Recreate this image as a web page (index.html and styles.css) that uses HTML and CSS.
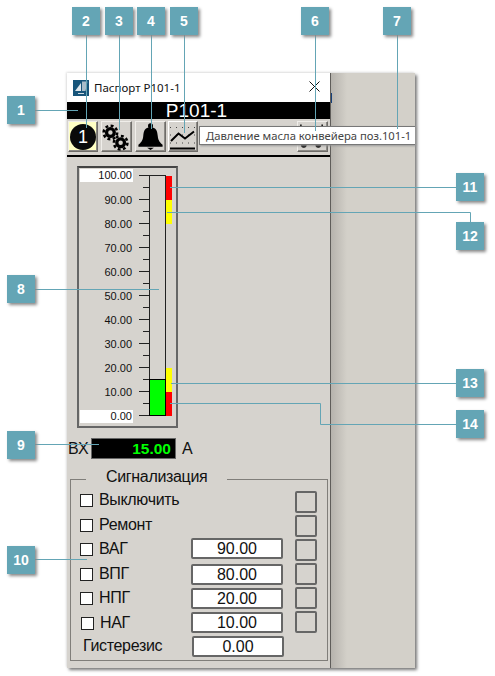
FILE: index.html
```html
<!DOCTYPE html>
<html lang="ru">
<head>
<meta charset="utf-8">
<title>Паспорт Р101-1</title>
<link rel="stylesheet" href="styles.css">
</head>
<body>
<main class="canvas">
  <section class="shot">
    <div class="window">
      <header class="titlebar">
        <svg class="logo" viewBox="0 0 16 16" width="16" height="16"><rect width="16" height="16" fill="#17557a"/><path d="M2 11 L8 3 L8 11Z" fill="#dfe7ec"/><path d="M9 11 L9 1.500 L14.500 1.500 L12.500 11Z" fill="#a9bdc9"/><rect x="5" y="13" width="6" height="1" fill="#cfdbe3"/></svg>
        <span class="title-text">Паспорт Р101-1</span>
        <svg class="close" viewBox="0 0 11 11" width="11" height="11"><path d="M0.5 0.5 L10.5 10.5 M10.5 0.5 L0.5 10.5" stroke="#111" stroke-width="1" fill="none"/></svg>
      </header>
      <div class="namebar">P101-1</div>
      <nav class="toolbar">
        <button class="tool tool-alert"><span class="num-circle">1</span></button>
        <button class="tool">
          <svg viewBox="0 0 30 30" width="30" height="30">
            <g fill="none" stroke="#000"><circle cx="8.700" cy="10.400" r="4" stroke-width="3.400"/><circle cx="8.700" cy="10.400" r="7" stroke-width="2.600" stroke-dasharray="3 2.500"/><circle cx="19.300" cy="21" r="4" stroke-width="3.400"/><circle cx="19.300" cy="21" r="7" stroke-width="2.600" stroke-dasharray="3 2.500"/></g>
          </svg>
        </button>
        <button class="tool">
          <svg viewBox="0 0 30 30" width="30" height="30"><circle cx="15" cy="3.500" r="2.600"/><path d="M15 5 C9 5 8 9 7.500 14 C7 19 5 21 2.500 23 L2.500 25 L27.500 25 L27.500 23 C25 21 23 19 22.500 14 C22 9 21 5 15 5Z"/><path d="M11.500 26 L18.500 26 L15 28.500Z"/></svg>
        </button>
        <button class="tool tool-pressed">
          <svg viewBox="0 0 28 28" width="28" height="28"><path d="M1 4.500 H26 M1 12 H26 M1 20 H26" stroke="#444" stroke-width="1" stroke-dasharray="1 5" fill="none"/><path d="M2 18 L9.500 10.500 L16 15.500 L25 8.500" stroke="#000" stroke-width="2" fill="none"/><rect x="1" y="24.500" width="25" height="2" fill="#000"/></svg>
        </button>
        <span class="tool-spacer"></span>
        <button class="tool">
          <svg viewBox="0 0 30 30" width="30" height="30"><path d="M3 2 V4 M25 2 V4" stroke="#000" stroke-width="1.500"/><circle cx="6" cy="23" r="3"/><circle cx="21" cy="23" r="3"/></svg>
        </button>
      </nav>
      <div class="toolbar-rule"></div>

      <div class="gauge">
        <div class="gauge-labels">
          <span class="gauge-label gauge-label-box">100.00</span>
          <span class="gauge-label">90.00</span>
          <span class="gauge-label">80.00</span>
          <span class="gauge-label">70.00</span>
          <span class="gauge-label">60.00</span>
          <span class="gauge-label">50.00</span>
          <span class="gauge-label">40.00</span>
          <span class="gauge-label">30.00</span>
          <span class="gauge-label">20.00</span>
          <span class="gauge-label">10.00</span>
          <span class="gauge-label gauge-label-box">0.00</span>
        </div>
        <svg class="gauge-scale" viewBox="0 0 36 246" width="36" height="246">
          <g stroke="#222" stroke-width="1" fill="none" shape-rendering="crispEdges">
            <path d="M0 3.500 H11 M0 27.500 H11 M0 51.500 H11 M0 75.500 H11 M0 99.500 H11 M0 123.500 H11 M0 147.500 H11 M0 171.500 H11 M0 195.500 H11 M0 219.500 H11 M0 243.500 H11"/>
            <path d="M4 15.500 H11 M4 39.500 H11 M4 63.500 H11 M4 87.500 H11 M4 111.500 H11 M4 135.500 H11 M4 159.500 H11 M4 183.500 H11 M4 207.500 H11 M4 231.500 H11"/>
            <path d="M10.500 3 V244 M26.500 3 V244 M11 3.500 H27"/>
          </g>
          <rect x="10.500" y="207.500" width="16" height="36" fill="#00ff00" stroke="#000" shape-rendering="crispEdges"/>
          <rect x="27" y="4" width="6" height="24" fill="#ff0000"/>
          <rect x="27" y="28" width="6" height="24" fill="#ffff00"/>
          <rect x="27" y="196" width="6" height="24" fill="#ffff00"/>
          <rect x="27" y="220" width="6" height="24" fill="#ff0000"/>
        </svg>
      </div>

      <div class="reading">
        <span class="reading-name">ВХ</span>
        <span class="reading-value">15.00</span>
        <span class="reading-unit">А</span>
      </div>

      <fieldset class="alarms">
        <legend class="alarms-title">Сигнализация</legend>
        <div class="alarm-row"><span class="lead lift-2"><span class="check"></span><span class="alarm-name">Выключить</span></span><span class="lamp"></span></div>
        <div class="alarm-row"><span class="lead lift-1"><span class="check"></span><span class="alarm-name">Ремонт</span></span><span class="lamp"></span></div>
        <div class="alarm-row"><span class="lead lift-1"><span class="check"></span><span class="alarm-name">ВАГ</span></span><span class="field field-lift">90.00</span><span class="lamp"></span></div>
        <div class="alarm-row"><span class="lead"><span class="check"></span><span class="alarm-name">ВПГ</span></span><span class="field">80.00</span><span class="lamp"></span></div>
        <div class="alarm-row"><span class="lead"><span class="check"></span><span class="alarm-name">НПГ</span></span><span class="field">20.00</span><span class="lamp"></span></div>
        <div class="alarm-row"><span class="lead lead-shift"><span class="check"></span><span class="alarm-name">НАГ</span></span><span class="field">10.00</span><span class="lamp"></span></div>
        <div class="hyst-row"><span class="hyst-name">Гистерезис</span><span class="field">0.00</span></div>
      </fieldset>
    </div>
    <div class="backdrop"><span class="sliver"></span></div>
  </section>

  <div class="tooltip">Давление масла конвейера поз.101-1</div>

  <svg class="leaders" viewBox="0 0 495 676" width="495" height="676">
    <path d="M35 110.500 H78 M86.500 35 V128 M119.500 35 V130 M151.500 35 V129 M184.500 35 V133 M315.500 35 V131 M397.500 35 V129 M35 289.500 H159 M35 444.500 H99 M35 559.500 H87 M170 187.500 H456 M167 212.500 H470.500 V222 M171 383.500 H456 M170 403.500 H320.500 V424.500 H456" fill="none" stroke="#64a5b5" stroke-width="1"/>
  </svg>
  <b class="badge b1">1</b><b class="badge b2">2</b><b class="badge b3">3</b><b class="badge b4">4</b><b class="badge b5">5</b><b class="badge b6">6</b><b class="badge b7">7</b><b class="badge b8">8</b><b class="badge b9">9</b><b class="badge b10">10</b><b class="badge b11">11</b><b class="badge b12">12</b><b class="badge b13">13</b><b class="badge b14">14</b>
</main>
</body>
</html>
```
FILE: styles.css
```css
* { box-sizing: border-box; }
html, body { margin: 0; padding: 0; background: #fff; }
body { font-family: "Liberation Sans", Arial, sans-serif; color: #111; overflow: hidden; }
.canvas { position: relative; width: 495px; height: 676px; overflow: hidden; }

.shot { position: absolute; left: 67px; top: 73px; width: 348px; height: 595px; display: flex; box-shadow: 2px 2px 3px #777, -1px -1px 2px #e4e4e4; }
.window { width: 264px; height: 595px; background: #d6d3ce; border-right: 1px solid #5f5d5a; display: flex; flex-direction: column; }
.backdrop { flex: 1; position: relative; background: linear-gradient(to right, #b6b3ad 0, #d3d0c9 16px, #d3d0c9 100%); }
.sliver { position: absolute; left: 0; top: 20px; width: 1px; height: 10px; background: #16407a; }

.titlebar { height: 29px; background: #fff; display: flex; align-items: center; padding: 0 10px 0 6px; flex: none; }
.logo { flex: none; }
.title-text { margin-left: 5px; font: 11.5px/16px "Noto Sans", sans-serif; color: #111; flex: 1; }
.close { flex: none; margin-bottom: 2px; }

.namebar { height: 17px; background: #000; color: #fff; font-size: 19px; line-height: 18px; text-align: center; padding-right: 4px; flex: none; }

.toolbar { height: 36px; padding: 2px 2px 0 1px; display: flex; gap: 3px; flex: none; }
.tool { width: 31px; height: 31px; padding: 0; background: #d6d3ce; border: 1px solid; border-color: #f0eeea #6e6c68 #6e6c68 #f0eeea; box-shadow: inset -1px -1px 0 #8c8a86; display: flex; align-items: center; justify-content: center; flex: none; }
.tool svg { display: block; }
.tool-alert { background: #ffffc4; width: 30px; }
.tool-pressed { width: 30px; margin-left: -1px; border-color: #fff #6e6c68 #6e6c68 #fff; }
.tool-spacer { flex: 1; }
.num-circle { width: 26px; height: 26px; border-radius: 50%; background: #0a0a0a; color: #fff; font: 18px/26px "Liberation Sans", sans-serif; text-align: center; display: block; }
.toolbar-rule { height: 2px; background: #000; flex: none; }

.gauge { width: 101px; height: 262px; margin: 9px 0 0 10px; border: 2px solid #666; border-top-color: #444; padding: 1px 0 0 1px; display: flex; flex: none; }
.gauge-labels { width: 53px; display: flex; flex-direction: column; flex: none; }
.gauge-label { height: 24px; font-size: 11px; line-height: 14px; text-align: right; padding-right: 1px; flex: none; color: #111; }
.gauge-label-box { height: 13px; background: #fff; line-height: 13px; margin-bottom: 11px; }
.gauge-label-box:last-child { margin: 1px 0 0; }
.gauge-scale { display: block; margin: 3px 0 0 6px; flex: none; }

.reading { display: flex; align-items: center; height: 21px; margin: 10px 0 0 1px; flex: none; }
.reading-name { width: 23px; font-size: 16px; line-height: 21px; }
.reading-value { width: 85px; height: 21px; background: #000; border: 1px solid #666; color: #00ff00; font-size: 15.5px; font-weight: bold; line-height: 19px; text-align: right; padding-right: 4px; }
.reading-unit { margin-left: 6px; font-size: 16px; line-height: 21px; }

.alarms { width: 258px; height: 192px; margin: 10px 0 0 3px; padding: 0 10px 0 9px; border: 1px solid #807e7a; flex: none; display: block; min-width: 0; }
.alarms-title { margin-left: 6px; padding: 0 20px 5px; font-size: 16px; letter-spacing: -0.33px; line-height: 16px; color: #111; }
.alarm-row { height: 24px; display: flex; align-items: center; }
.lead { flex: 1; display: flex; align-items: center; }
.lift-2 { margin-bottom: 4px; }
.lift-1 { margin-bottom: 2px; }
.lead-shift { padding-left: 1px; margin-top: 2px; }
.check { width: 13px; height: 13px; background: #fff; border: 1px solid #222; flex: none; }
.alarm-name { margin-left: 6px; font-size: 16px; letter-spacing: -0.33px; line-height: 20px; }
.field { width: 92px; height: 21px; background: #fff; border: 2px solid #666; border-radius: 2px; font-size: 16px; line-height: 17px; text-align: center; flex: none; }
.field-lift { margin-bottom: 4px; }
.lamp { width: 22px; height: 22px; margin-left: 12px; border: 2px solid #666; border-radius: 2px; flex: none; }
.hyst-row { height: 22px; margin-top: 1px; display: flex; align-items: center; padding-left: 3px; }
.hyst-name { width: 109px; font-size: 16px; letter-spacing: -0.33px; line-height: 20px; }

.tooltip { position: absolute; left: 199px; top: 126px; width: 216px; height: 19px; background: #fff; border: 1px solid #777; border-right: 0; padding-left: 6px; font: 11.25px/17px "Noto Sans", sans-serif; color: #444; white-space: nowrap; box-shadow: 1px 1px 2px #999; }

.leaders { position: absolute; left: 0; top: 0; }
.badge { position: absolute; width: 28px; height: 28px; background: #64a5b5; color: #fff; font: bold 14px/28px "Liberation Sans", sans-serif; text-align: center; box-shadow: 2px 2px 3px #888; }
.b1 { left: 7px; top: 96px; }
.b2 { left: 72px; top: 7px; }
.b3 { left: 105px; top: 7px; }
.b4 { left: 137px; top: 7px; }
.b5 { left: 170px; top: 7px; }
.b6 { left: 301px; top: 7px; }
.b7 { left: 383px; top: 7px; }
.b8 { left: 7px; top: 275px; }
.b9 { left: 7px; top: 431px; }
.b10 { left: 7px; top: 546px; }
.b11 { left: 456px; top: 173px; }
.b12 { left: 456px; top: 222px; }
.b13 { left: 456px; top: 369px; }
.b14 { left: 456px; top: 410px; }
```
